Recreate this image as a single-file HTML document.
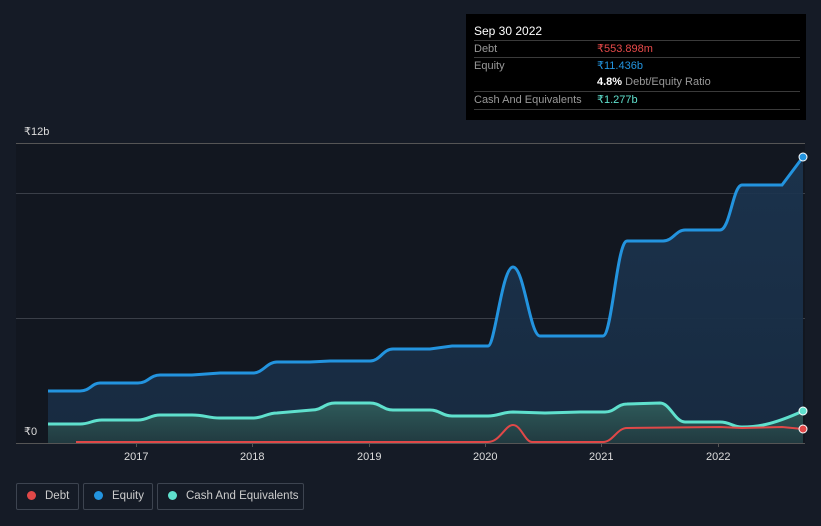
<!DOCTYPE html>
<html><head><style>
html,body{margin:0;width:821px;height:526px;overflow:hidden}
body{background:#151b26;font-family:"Liberation Sans",sans-serif;position:relative}
.tip{position:absolute;left:466px;top:14px;width:340px;height:106px;background:#000;color:#fff;font-size:11px}
.row{position:absolute;left:8px;width:326px;border-top:1px solid #3a3a3a;height:17px;line-height:17px}
.lbl{color:#999}
.v{position:absolute;left:123px}
.leg{position:absolute;top:483px;height:27px;border:1px solid #3d4450;border-radius:2px;color:#ccc;font-size:11.5px;line-height:25px;box-sizing:border-box;white-space:nowrap;overflow:hidden}
.dot{display:inline-block;width:9px;height:9px;border-radius:50%;margin:0 9px 0 10px;vertical-align:-1px}
.ax{position:absolute;color:#ddd;font-size:11px}
</style></head><body>
<svg width="821" height="526" style="position:absolute;left:0;top:0">
<defs>
<linearGradient id="eq" x1="0" y1="0" x2="0" y2="1"><stop offset="0" stop-color="#1c3550" stop-opacity=".9"/><stop offset="1" stop-color="#172a40"/></linearGradient>
<linearGradient id="ca" x1="0" y1="0" x2="0" y2="1"><stop offset="0" stop-color="#2e5a5a"/><stop offset="1" stop-color="#213a40"/></linearGradient>
</defs>
<rect x="16" y="143" width="789" height="300" fill="#121720"/>
<g stroke="#3a3f48" stroke-width="1">
<line x1="16" y1="143.5" x2="805" y2="143.5" stroke="#555"/>
<line x1="16" y1="193.5" x2="805" y2="193.5"/>
<line x1="16" y1="318.5" x2="805" y2="318.5"/>
<line x1="16" y1="443.5" x2="805" y2="443.5" stroke="#555"/>
</g>
<path d="M48,391 L80,391 C90,391 92,383 100,383 L138,383 C148,383 150,375 160,375 L192,375 L220,373 L253,373 C263,373 267,362 277,362 L310,362 L330,361 L370,361 C380,361 383,349 393,349 L430,349 L452,346 L488,346 C495,346 502,267 513,267 C524,267 530,336 540,336 L603,336 C612,336 617,241 627,241 L663,241 C673,241 676,230 685,230 L720,230 C730,230 733,185 742,185 L782,185 L803,157 L803,443 L48,443Z" fill="url(#eq)"/>
<path d="M48,424 L80,424 C90,424 92,420 102,420 L138,420 C148,420 150,415 160,415 L192,415 C205,415 208,418 220,418 L253,418 C263,418 267,413 277,413 L312,410 C322,410 325,403 335,403 L370,403 C380,403 383,410 393,410 L430,410 C440,410 442,416 452,416 L488,416 C498,416 503,412 513,412 L545,413 L580,412 L605,412 C615,412 617,404 627,404 L660,403 C670,403 675,422 685,422 L720,422 C730,422 733,427 742,427 C755,427 770,426 803,411 L803,443 L48,443Z" fill="url(#ca)"/>
<path d="M48,391 L80,391 C90,391 92,383 100,383 L138,383 C148,383 150,375 160,375 L192,375 L220,373 L253,373 C263,373 267,362 277,362 L310,362 L330,361 L370,361 C380,361 383,349 393,349 L430,349 L452,346 L488,346 C495,346 502,267 513,267 C524,267 530,336 540,336 L603,336 C612,336 617,241 627,241 L663,241 C673,241 676,230 685,230 L720,230 C730,230 733,185 742,185 L782,185 L803,157" fill="none" stroke="#2394df" stroke-width="3"/>
<path d="M48,424 L80,424 C90,424 92,420 102,420 L138,420 C148,420 150,415 160,415 L192,415 C205,415 208,418 220,418 L253,418 C263,418 267,413 277,413 L312,410 C322,410 325,403 335,403 L370,403 C380,403 383,410 393,410 L430,410 C440,410 442,416 452,416 L488,416 C498,416 503,412 513,412 L545,413 L580,412 L605,412 C615,412 617,404 627,404 L660,403 C670,403 675,422 685,422 L720,422 C730,422 733,427 742,427 C755,427 770,426 803,411" fill="none" stroke="#5fe0cd" stroke-width="3"/>
<path d="M76,442 L488,442 C500,442 505,425 513,425 C521,425 525,442 532,442 L603,442 C613,442 617,428 627,428 L720,427 L742,428 L782,427 L803,429" fill="none" stroke="#e04848" stroke-width="2"/>
<circle cx="803" cy="157" r="4" fill="#2394df" stroke="#fff" stroke-width="1"/>
<circle cx="803" cy="411" r="4" fill="#5fe0cd" stroke="#fff" stroke-width="1"/>
<circle cx="803" cy="429" r="4" fill="#e04848" stroke="#fff" stroke-width="1"/>
<g stroke="#555"><line x1="136.5" y1="443" x2="136.5" y2="447"/><line x1="252.5" y1="443" x2="252.5" y2="447"/><line x1="369.5" y1="443" x2="369.5" y2="447"/><line x1="485.5" y1="443" x2="485.5" y2="447"/><line x1="601.5" y1="443" x2="601.5" y2="447"/><line x1="718.5" y1="443" x2="718.5" y2="447"/></g>
</svg>
<div class="ax" style="left:24px;top:125px">₹12b</div>
<div class="ax" style="left:24px;top:425px">₹0</div>
<div class="ax" style="left:124px;top:451px">2017</div>
<div class="ax" style="left:240px;top:451px">2018</div>
<div class="ax" style="left:357px;top:451px">2019</div>
<div class="ax" style="left:473px;top:451px">2020</div>
<div class="ax" style="left:589px;top:451px">2021</div>
<div class="ax" style="left:706px;top:451px">2022</div>
<div class="tip">
<div style="position:absolute;left:8px;top:10px;font-size:12px">Sep 30 2022</div>
<div class="row" style="top:26px"><span class="lbl">Debt</span><span class="v" style="color:#e84a4a">₹553.898m</span></div>
<div class="row" style="top:43px"><span class="lbl">Equity</span><span class="v" style="color:#2394df">₹11.436b</span></div>
<div class="row" style="top:60px;border-top:none"><span class="v"><b>4.8%</b> <span class="lbl">Debt/Equity Ratio</span></span></div>
<div class="row" style="top:77px;border-bottom:1px solid #3a3a3a"><span class="lbl">Cash And Equivalents</span><span class="v" style="color:#5fe0cd">₹1.277b</span></div>
</div>
<div class="leg" style="left:16px;width:63px"><span class="dot" style="background:#e04848"></span>Debt</div>
<div class="leg" style="left:83px;width:70px"><span class="dot" style="background:#2394df"></span>Equity</div>
<div class="leg" style="left:157px;width:147px"><span class="dot" style="background:#5fe0cd"></span>Cash And Equivalents</div>
</body></html>
